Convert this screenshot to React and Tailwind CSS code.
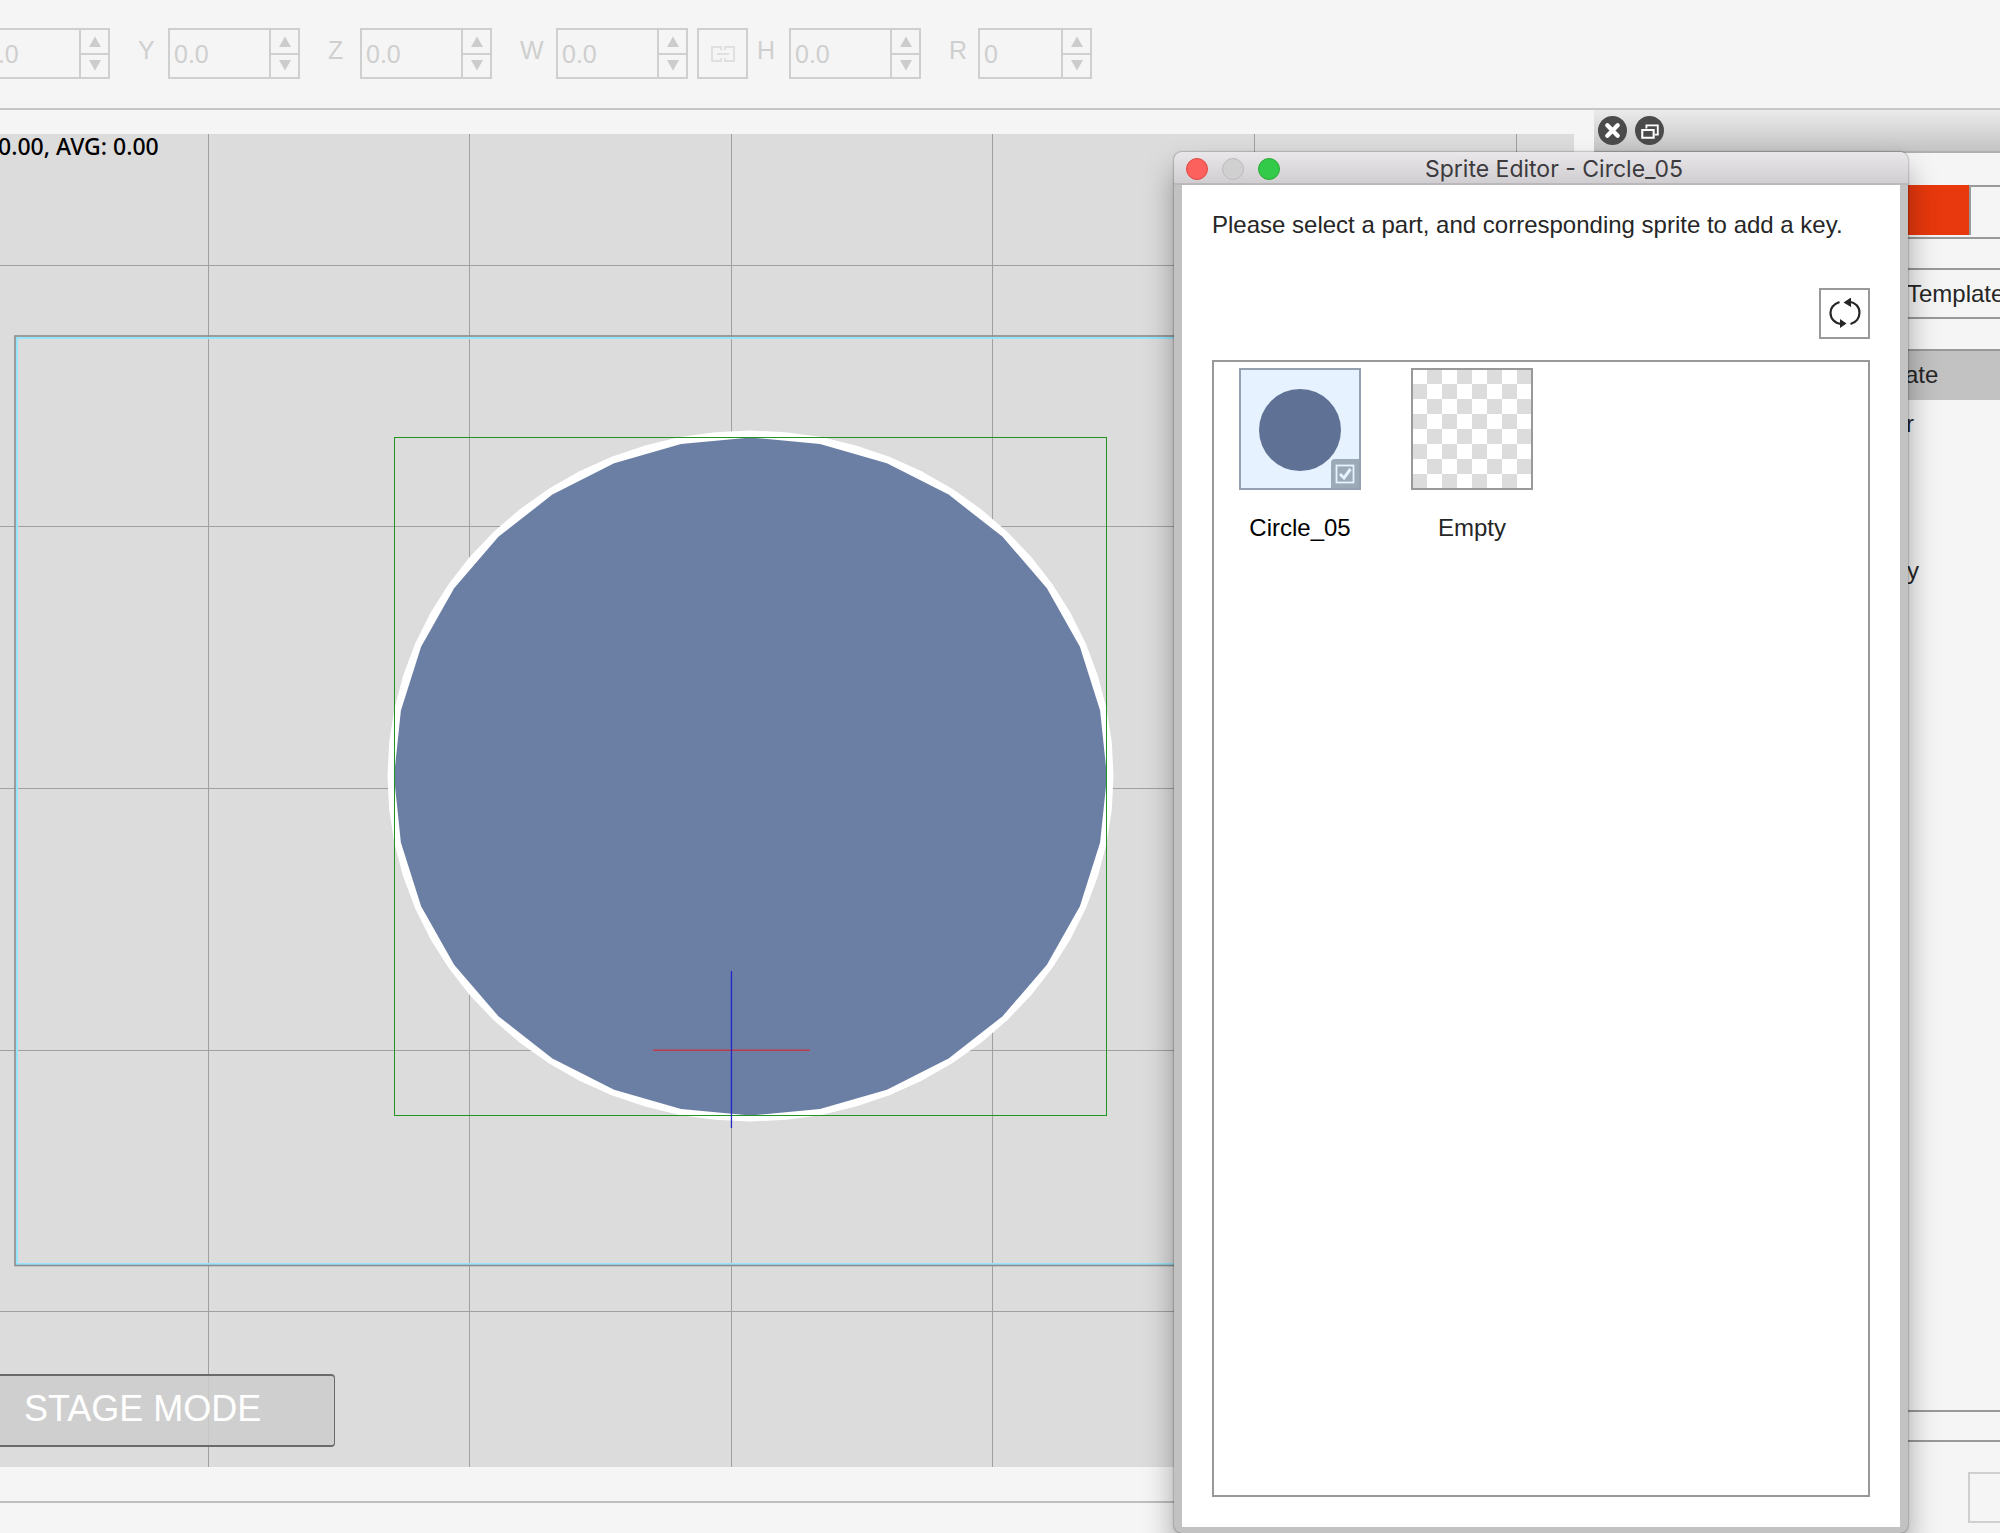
import { useState } from "react";

const GRID_X = [208, 469, 731, 992, 1254, 1516];
const GRID_Y = [265, 526, 788, 1050, 1311];

const SPRITES = [
  { id: "circle", label: "Circle_05" },
  { id: "empty", label: "Empty" },
];

const TEMPLATE_ROWS = [
  { id: 1, text: "ate", selected: true, pad: "pl-[311px]" },
  { id: 2, text: "r", pad: "pl-[312px]" },
  { id: 3, text: "" },
  { id: 4, text: "" },
  { id: 5, text: "y", pad: "pl-[313px]" },
];

function ellipsePoints(cx, cy, rx, ry, sides) {
  return Array.from({ length: sides }, (_, i) => {
    const a = (i / sides) * Math.PI * 2;
    return `${(cx + rx * Math.cos(a)).toFixed(1)},${(cy + ry * Math.sin(a)).toFixed(1)}`;
  }).join(" ");
}

function NumberField({ label, value, labelWidth = "w-[30px]", width = "w-[132px]", hideLabel }) {
  const id = `field-${label}`;
  return (
    <div className="flex shrink-0 items-center text-[25px] leading-[30px] text-[#cfcfcf]">
      {!hideLabel && (
        <label htmlFor={id} className={`${labelWidth} pb-2`}>
          {label}
        </label>
      )}
      <div className={`${width} flex h-[51px] border-2 border-[#cfcfcf]`}>
        <input
          id={id}
          aria-label={label}
          type="text"
          defaultValue={value}
          disabled
          className="min-w-0 flex-1 bg-transparent pl-1"
        />
        <div className="flex w-[29px] flex-col border-l-2 border-[#cfcfcf]">
          <button disabled aria-label={`Increase ${label}`} className="flex flex-1 items-center justify-center border-b-2 border-[#cfcfcf]">
            <svg width="12" height="11" viewBox="0 0 12 11">
              <path d="M6 0.500L12 11H0Z" fill="#cccccc" />
            </svg>
          </button>
          <button disabled aria-label={`Decrease ${label}`} className="flex flex-1 items-center justify-center">
            <svg width="12" height="11" viewBox="0 0 12 11">
              <path d="M0 0H12L6 10.500Z" fill="#cccccc" />
            </svg>
          </button>
        </div>
      </div>
    </div>
  );
}

function Toolbar() {
  return (
    <header className="flex items-center gap-7 border-b-2 border-[#c6c6c6] pt-7 pb-[29px]">
      <div className="-ml-[22px]">
        <NumberField label="X" value="0.0" hideLabel />
      </div>
      <NumberField label="Y" value="0.0" />
      <NumberField label="Z" value="0.0" labelWidth="w-8" />
      <div className="flex items-center gap-[9px]">
        <NumberField label="W" value="0.0" labelWidth="w-9" />
        <button
          disabled
          aria-label="Link width and height"
          className="flex h-[51px] w-[51px] items-center justify-center border-2 border-[#cfcfcf]"
        >
          <svg width="24" height="16" viewBox="0 0 24 16" fill="none" stroke="#e0e0e0" strokeWidth="2">
            <path d="M10 4V1H1V15H10V12M14 4V1H23V15H14V12M6 8H18" />
          </svg>
        </button>
        <NumberField label="H" value="0.0" labelWidth="w-8" />
      </div>
      <NumberField label="R" value="0" labelWidth="w-[29px]" width="w-[114px]" />
    </header>
  );
}

function Stage() {
  return (
    <main className="relative flex-1 overflow-hidden bg-[#dcdcdc]">
      {/* origin of the drawing is the window corner, so the stage starts at y = 134 */}
      <svg className="absolute inset-0 h-full w-full">
        <g transform="translate(0 -134)">
          <g fill="#a0a0a0">
            {GRID_X.map((x) => (
              <rect key={x} x={x} y="134" width="1" height="1400" />
            ))}
            {GRID_Y.map((y) => (
              <rect key={y} x="0" y={y} width="1574" height="1" />
            ))}
          </g>
          <rect x="17" y="338" width="1700" height="926" fill="none" stroke="#97e5fc" strokeWidth="2" />
          <rect x="15" y="336" width="1704" height="929.500" fill="none" stroke="#8c8c8c" strokeWidth="1.600" />
          <polygon points={ellipsePoints(750.5, 776, 363, 345.5, 64)} fill="#fff" />
          <polygon points={ellipsePoints(750.5, 776.5, 356.5, 339, 32)} fill="#6b7fa5" />
          <rect x="394.500" y="437.500" width="712" height="678" fill="none" stroke="#1f961f" />
          <rect x="653" y="1049.500" width="157" height="1.500" fill="#c03a4c" />
          <rect x="730.800" y="971" width="1.300" height="157" fill="#2226c4" />
        </g>
      </svg>
      <div className="relative flex h-full flex-col items-start justify-between pb-5">
        <p className="-ml-[2px] font-['Noto_Sans'] text-[23px] leading-[24px] font-medium text-black">
          0.00, AVG: 0.00
        </p>
        <div className="w-[335px] rounded-r-[4px] border-y-2 border-r border-[#6a6a6a] bg-[#cccccc]/85 pt-[10px] pb-[14px] pl-6 text-[36px] leading-[45px] text-white">
          STAGE MODE
        </div>
      </div>
    </main>
  );
}

function TemplatePanel() {
  return (
    <aside className="flex w-[406px] shrink-0 flex-col overflow-hidden text-[24px] leading-7 text-[#262626]">
      <div className="flex h-[43px] items-start gap-2 border-b-2 border-[#b0b0b0] bg-linear-to-b from-[#ebebeb] to-[#c4c4c4] pt-[6px] pl-1">
        <button aria-label="Close panel">
          <svg width="29" height="29" viewBox="0 0 28 28" className="block">
            <circle cx="14" cy="14" r="14" fill="#4b4b4b" />
            <path d="M9 9L19 19M19 9L9 19" stroke="#fff" strokeWidth="4.200" strokeLinecap="round" />
          </svg>
        </button>
        <button aria-label="Float panel">
          <svg width="29" height="29" viewBox="0 0 28 28" className="block" fill="none" stroke="#fff" strokeWidth="1.800">
            <circle cx="14" cy="14" r="14" fill="#4b4b4b" stroke="none" />
            <path d="M11 12V9H22V18H19" />
            <path d="M7 13.500H18V21H7Z" strokeWidth="2" />
          </svg>
        </button>
      </div>
      <div className="mt-8 flex h-[54px] border-b-2 border-[#999]">
        <div className="mb-[2px] w-[377px] border-r-2 border-[#999] bg-[#e8380d]" />
        <div className="flex-1 border-t-2 border-[#999]" />
      </div>
      <div className="mt-[29px] h-[51px] border-y-2 border-[#999] py-[10px] pl-[313px]">Template</div>
      <ul className="mt-[30px] flex-1 border-y-2 border-[#999]">
        {TEMPLATE_ROWS.map((row) => (
          <li
            key={row.id}
            className={`h-[49px] py-[10px] ${row.pad || ""} ${row.selected ? "bg-[#c2c2c2]" : ""}`}
          >
            {row.text}
          </li>
        ))}
      </ul>
      <div className="mt-[28px] flex h-[93px] justify-end border-t-2 border-[#999] pt-[30px]">
        <button aria-label="Add" className="h-[51px] w-8 border-2 border-r-0 border-[#cfcfcf]" />
      </div>
    </aside>
  );
}

function CirclePreview() {
  return (
    <>
      <svg viewBox="0 0 118 118" className="h-full w-full bg-[#e6f2ff]">
        <circle cx="59" cy="60" r="41" fill="#5f7194" />
      </svg>
      <span className="absolute right-0 bottom-0 flex h-[29px] w-7 items-center justify-center rounded-tl-[4px] bg-[#9ca9b7]">
        <svg width="20" height="20" viewBox="0 0 20 20" fill="none" stroke="#e6f2ff">
          <rect x="1.500" y="1.500" width="17" height="17" strokeWidth="1.800" />
          <path d="M5 10L9 14L15.500 5" strokeWidth="3" />
        </svg>
      </span>
    </>
  );
}

function EmptyPreview() {
  const cells = [];
  for (let r = 0; r < 8; r++) {
    for (let c = 0; c < 8; c++) {
      if ((r + c) % 2) cells.push(<rect key={`${r}-${c}`} x={c * 15} y={r * 15} width="15" height="15" />);
    }
  }
  return (
    <svg viewBox="1 1 118 118" className="h-full w-full bg-white" fill="#dcdcdc">
      {cells}
    </svg>
  );
}

function SpriteEditor() {
  const [selected, setSelected] = useState("circle");

  return (
    <section
      aria-label="Sprite Editor"
      className="absolute top-[152px] right-[92px] bottom-0 flex w-[734px] flex-col overflow-hidden rounded-[8px] bg-[#c2c2c2] shadow-[0_18px_30px_rgba(0,0,0,0.35),0_0_2px_rgba(0,0,0,0.6)]"
    >
      <div className="relative flex h-[33px] items-center justify-center border-b-2 border-[#bab8bb] bg-linear-to-b from-[#e9e7ea] to-[#d0ced1] pt-[2px]">
        <div className="absolute left-3 flex gap-[14px]">
          <button aria-label="Close" className="h-[22px] w-[22px] rounded-full border border-[#e2463f] bg-[#fc615d]" />
          <button aria-label="Minimize" disabled className="h-[22px] w-[22px] rounded-full border border-[#bcbcbc] bg-[#d0d0d0]" />
          <button aria-label="Zoom" className="h-[22px] w-[22px] rounded-full border border-[#27aa35] bg-[#34ca49]" />
        </div>
        <h1 className="pl-[26px] font-[Inter] text-[23px] leading-7 text-[#3c3a3d]">Sprite Editor - Circle_05</h1>
      </div>
      <div className="mx-2 mb-[6px] flex flex-1 flex-col bg-white px-[30px] pt-[26px] pb-[30px] text-[24px] leading-7 text-[#262626]">
        <p>Please select a part, and corresponding sprite to add a key.</p>
        <button
          aria-label="Refresh"
          className="mt-[49px] flex h-[51px] w-[51px] items-center justify-center self-end border-2 border-[#999]"
        >
          <svg width="32" height="32" viewBox="0 0 32 32" fill="none" stroke="#262626" strokeWidth="2.200">
            <path d="M10.500 4C5 6 1.500 10 1.500 15C1.500 20.500 5.500 25.200 12 26" />
            <path d="M20 3.500C26.500 4.500 30.500 9 30.500 14.500C30.500 20 27 24.500 21.500 26" />
            <path d="M14.500 4.500L22 -0.500V9Z M17.500 25.500L11 21V30Z" fill="#262626" stroke="none" />
          </svg>
        </button>
        <div className="mt-[21px] flex flex-1 items-start gap-[50px] border-2 border-[#999] px-[25px] pt-[6px]">
          {SPRITES.map((sprite) => (
            <button
              key={sprite.id}
              onClick={() => setSelected(sprite.id)}
              aria-pressed={selected === sprite.id}
              className="flex w-[122px] flex-col items-center gap-6"
            >
              <span
                className={`relative block h-[122px] w-full border-2 ${
                  sprite.id === "circle" ? "border-[#94a1b0]" : "border-[#999]"
                }`}
              >
                {sprite.id === "circle" ? <CirclePreview /> : <EmptyPreview />}
              </span>
              <span className={selected === sprite.id ? "text-black" : ""}>{sprite.label}</span>
            </button>
          ))}
        </div>
      </div>
    </section>
  );
}

export default function App() {
  return (
    <div className="relative flex min-h-screen flex-col overflow-hidden bg-[#f5f5f5] font-['Liberation_Sans',Arial,sans-serif]">
      <Toolbar />
      <div className="flex flex-1">
        <div className="flex flex-1 flex-col">
          <div className="mt-6 mr-5 flex flex-1">
            <Stage />
          </div>
          <div className="mt-[34px] h-8 border-t-2 border-[#bdbdbd]" />
        </div>
        <TemplatePanel />
      </div>
      <SpriteEditor />
    </div>
  );
}
